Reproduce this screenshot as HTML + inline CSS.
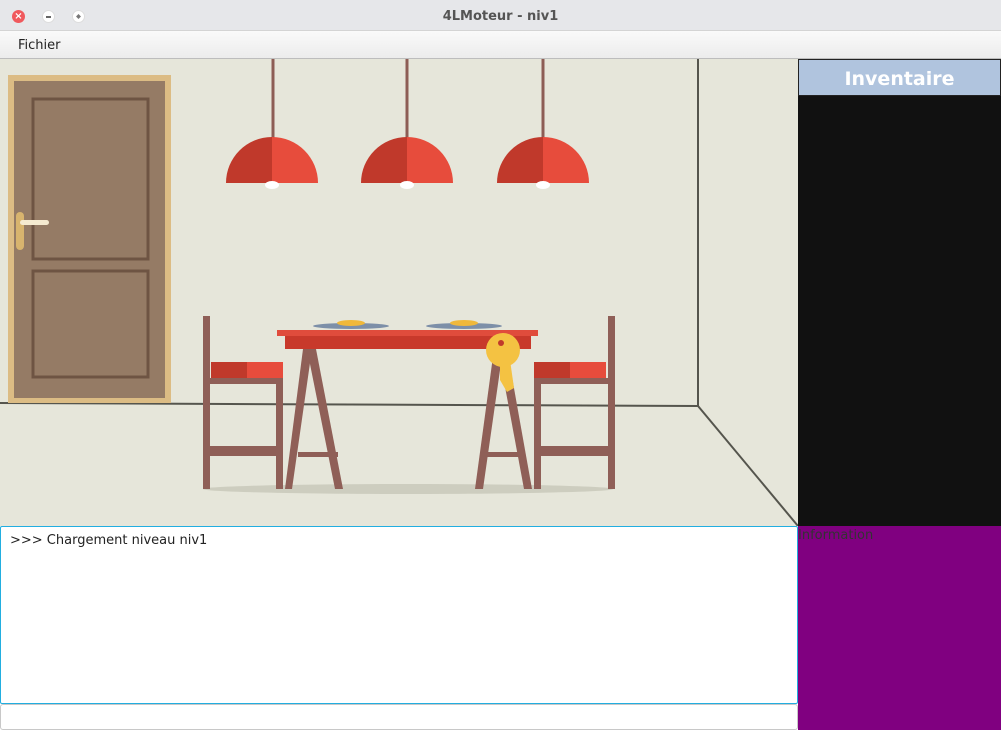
<!DOCTYPE html>
<html><head><meta charset="utf-8"><style>
body{margin:0;width:1001px;height:730px;overflow:hidden;position:relative;font-family:"DejaVu Sans","Liberation Sans",sans-serif;background:#fff}
.abs{position:absolute}
</style></head><body>
<div class="abs" style="left:0;top:0;width:1001px;height:30px;background:#e6e7ea;border-bottom:1px solid #d4d4d4"></div>
<div class="abs" style="left:12px;top:10px;width:13px;height:13px;border-radius:50%;background:#f0595d;color:#fff;font-size:10px;line-height:13px;text-align:center;font-weight:bold">×</div>
<div class="abs" style="left:42px;top:10px;width:13px;height:13px;border-radius:50%;background:#fff;border:1px solid #ddd;box-sizing:border-box"><div class="abs" style="left:3px;top:5px;width:5px;height:2px;background:#666"></div></div>
<div class="abs" style="left:72px;top:10px;width:13px;height:13px;border-radius:50%;background:#fff;border:1px solid #ddd;box-sizing:border-box"><div class="abs" style="left:3px;top:3px;width:5px;height:5px;background:#777;transform:rotate(45deg) scale(.7)"></div></div>
<div class="abs" style="left:0;top:9px;width:1001px;text-align:center;font-size:13px;font-weight:bold;color:#555">4LMoteur - niv1</div>
<div class="abs" style="left:0;top:31px;width:1001px;height:27px;background:linear-gradient(#fafafa,#ececec);border-bottom:1px solid #bdbdbd"></div>
<div class="abs" style="left:18px;top:38px;font-size:13px;color:#222">Fichier</div>
<svg class="abs" style="left:0;top:59px" width="798" height="467" viewBox="0 59 798 467">
<rect x="0" y="59" width="798" height="467" fill="#e6e6da"/>
<line x1="698" y1="59" x2="698" y2="406" stroke="#55554d" stroke-width="2"/>
<polyline points="0,403 698,406 798,526" fill="none" stroke="#55554d" stroke-width="2"/>
<rect x="8" y="75" width="163" height="328" fill="#dcbc84"/>
<rect x="14" y="81" width="151" height="317" fill="#957b65"/>
<rect x="33" y="99" width="115" height="160" fill="none" stroke="#6e5443" stroke-width="3"/>
<rect x="33" y="271" width="115" height="106" fill="none" stroke="#6e5443" stroke-width="3"/>
<rect x="16" y="212" width="8" height="38" rx="4" fill="#d8b46e"/>
<rect x="20" y="220" width="29" height="5" rx="2.5" fill="#f5ead0"/>
<g stroke="#8d5d55" stroke-width="3"><line x1="273" y1="59" x2="273" y2="140"/><line x1="407" y1="59" x2="407" y2="140"/><line x1="543" y1="59" x2="543" y2="140"/></g>
<g>
<path d="M226,183 A46,46 0 0 1 272,137 V183Z" fill="#c0392b"/><path d="M272,137 A46,46 0 0 1 318,183 H272Z" fill="#e74c3c"/><ellipse cx="272" cy="185" rx="7" ry="4" fill="#fff"/>
<path d="M361,183 A46,46 0 0 1 407,137 V183Z" fill="#c0392b"/><path d="M407,137 A46,46 0 0 1 453,183 H407Z" fill="#e74c3c"/><ellipse cx="407" cy="185" rx="7" ry="4" fill="#fff"/>
<path d="M497,183 A46,46 0 0 1 543,137 V183Z" fill="#c0392b"/><path d="M543,137 A46,46 0 0 1 589,183 H543Z" fill="#e74c3c"/><ellipse cx="543" cy="185" rx="7" ry="4" fill="#fff"/>
</g>
<ellipse cx="408" cy="489" rx="205" ry="5" fill="#cdcdbf"/>
<g fill="#8f5f57">
<rect x="203" y="316" width="7" height="173"/><rect x="276" y="378" width="7" height="111"/><rect x="209" y="378" width="74" height="6"/><rect x="209" y="446" width="74" height="10"/>
<rect x="608" y="316" width="7" height="173"/><rect x="534" y="378" width="7" height="111"/><rect x="534" y="378" width="74" height="6"/><rect x="534" y="446" width="74" height="10"/>
<polygon points="303,349 312,349 292,489 285,489"/><polygon points="307,349 316,349 343,489 335,489"/><rect x="298" y="452" width="40" height="5"/>
<polygon points="494,349 503,349 483,489 475,489"/><polygon points="498,349 507,349 532,489 524,489"/><rect x="480" y="452" width="45" height="5"/>
</g>
<rect x="211" y="362" width="36" height="16" fill="#c0392b"/><rect x="247" y="362" width="36" height="16" fill="#e74c3c"/>
<rect x="534" y="362" width="36" height="16" fill="#c0392b"/><rect x="570" y="362" width="36" height="16" fill="#e74c3c"/>
<ellipse cx="351" cy="326" rx="38" ry="3" fill="#7d8fa8"/><ellipse cx="351" cy="323" rx="14" ry="3" fill="#f0b83a"/>
<ellipse cx="464" cy="326" rx="38" ry="3" fill="#7d8fa8"/><ellipse cx="464" cy="323" rx="14" ry="3" fill="#f0b83a"/>
<rect x="277" y="330" width="261" height="6" fill="#e04c3c"/>
<rect x="285" y="336" width="246" height="13" fill="#c8392b"/>
<polygon points="500,360 510,360 514,388 507,392 500,380" fill="#f4c242"/>
<circle cx="503" cy="350" r="17" fill="#f4c242"/><circle cx="501" cy="343" r="3" fill="#c0392b"/>
</svg>
<div class="abs" style="left:798px;top:59px;width:203px;height:467px;background:#111"></div>
<div class="abs" style="left:798px;top:59px;width:201px;height:35px;background:#b0c4de;border:1px solid #222;color:#fff;font-weight:bold;font-size:19px;text-align:center;line-height:38px">Inventaire</div>
<div class="abs" style="left:798px;top:526px;width:203px;height:204px;background:#800080"></div>
<div class="abs" style="left:798px;top:528px;font-size:13px;color:#333">Information</div>
<div class="abs" style="left:0;top:526px;width:796px;height:176px;border:1px solid #22aee0;border-radius:2px;background:#fff"></div>
<div class="abs" style="left:10px;top:533px;font-size:13px;color:#222">&gt;&gt;&gt; Chargement niveau niv1</div>
<div class="abs" style="left:0;top:704px;width:796px;height:24px;border:1px solid #c8c8c8;border-radius:3px;background:#fff"></div>
</body></html>
